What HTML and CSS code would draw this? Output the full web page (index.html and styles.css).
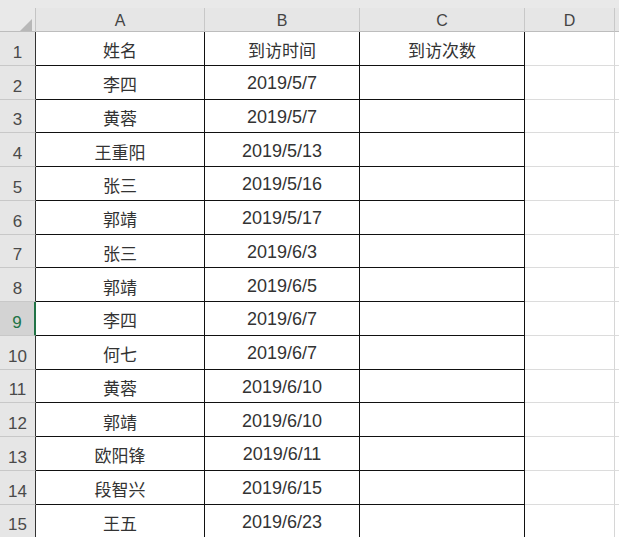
FILE: index.html
```
<!DOCTYPE html>
<html lang="zh">
<head>
<meta charset="utf-8">
<link rel="stylesheet" href="styles.css">
</head>
<body>
<div class="sheet">
  <div class="strip corner-strip"></div><div class="strip"></div><div class="strip"></div><div class="strip"></div><div class="strip"></div><div class="strip"></div>
  <div class="corner"><svg class="tri" width="12" height="12" viewBox="0 0 12 12"><polygon points="12,0 12,12 0,12" fill="#b8b8b8"/></svg></div>
  <div class="colh">A</div><div class="colh">B</div><div class="colh">C</div><div class="colh">D</div><div class="colh rest"></div>

  <div class="rowh">1</div><div class="cell">姓名</div><div class="cell">到访时间</div><div class="cell">到访次数</div><div class="cell grid"></div><div class="cell tail"></div>
  <div class="rowh">2</div><div class="cell">李四</div><div class="cell num">2019/5/7</div><div class="cell"></div><div class="cell grid"></div><div class="cell tail"></div>
  <div class="rowh">3</div><div class="cell">黄蓉</div><div class="cell num">2019/5/7</div><div class="cell"></div><div class="cell grid"></div><div class="cell tail"></div>
  <div class="rowh">4</div><div class="cell">王重阳</div><div class="cell num">2019/5/13</div><div class="cell"></div><div class="cell grid"></div><div class="cell tail"></div>
  <div class="rowh">5</div><div class="cell">张三</div><div class="cell num">2019/5/16</div><div class="cell"></div><div class="cell grid"></div><div class="cell tail"></div>
  <div class="rowh">6</div><div class="cell">郭靖</div><div class="cell num">2019/5/17</div><div class="cell"></div><div class="cell grid"></div><div class="cell tail"></div>
  <div class="rowh">7</div><div class="cell">张三</div><div class="cell num">2019/6/3</div><div class="cell"></div><div class="cell grid"></div><div class="cell tail"></div>
  <div class="rowh">8</div><div class="cell">郭靖</div><div class="cell num">2019/6/5</div><div class="cell"></div><div class="cell grid"></div><div class="cell tail"></div>
  <div class="rowh active">9</div><div class="cell">李四</div><div class="cell num">2019/6/7</div><div class="cell"></div><div class="cell grid"></div><div class="cell tail"></div>
  <div class="rowh">10</div><div class="cell">何七</div><div class="cell num">2019/6/7</div><div class="cell"></div><div class="cell grid"></div><div class="cell tail"></div>
  <div class="rowh">11</div><div class="cell">黄蓉</div><div class="cell num">2019/6/10</div><div class="cell"></div><div class="cell grid"></div><div class="cell tail"></div>
  <div class="rowh">12</div><div class="cell">郭靖</div><div class="cell num">2019/6/10</div><div class="cell"></div><div class="cell grid"></div><div class="cell tail"></div>
  <div class="rowh">13</div><div class="cell">欧阳锋</div><div class="cell num">2019/6/11</div><div class="cell"></div><div class="cell grid"></div><div class="cell tail"></div>
  <div class="rowh">14</div><div class="cell">段智兴</div><div class="cell num">2019/6/15</div><div class="cell"></div><div class="cell grid"></div><div class="cell tail"></div>
  <div class="rowh">15</div><div class="cell">王五</div><div class="cell num">2019/6/23</div><div class="cell"></div><div class="cell grid"></div><div class="cell tail"></div>
</div>
</body>
</html>
```
FILE: styles.css
```
* { box-sizing: border-box; }
html, body { margin: 0; padding: 0; background: #fff; overflow: hidden; }
body { width: 619px; height: 537px; }

.sheet {
  display: grid;
  grid-template-columns: 36px 169px 155px 165px 90px 4px;
  grid-template-rows: 8px 24px repeat(15, 33.75px);
  font-family: "Liberation Sans", "Noto Sans CJK SC", sans-serif;
}

.strip { background: #e9e9e9; }

.corner {
  background: #e9e9e9;
  border-right: 1px solid #c4c4c4;
  border-bottom: 1px solid #bdbdbd;
  position: relative;
}
.tri { position: absolute; left: 20px; top: 11px; }

.colh {
  background: #e6e6e6;
  border-right: 1px solid #c8c8c8;
  border-bottom: 1px solid #bdbdbd;
  display: flex;
  align-items: center;
  justify-content: center;
  font-size: 16px;
  color: #444;
  padding-top: 2px;
}
.colh.rest { border-right: none; }

.rowh {
  background: #e6e6e6;
  border-right: 1px solid #333;
  border-bottom: 1px solid #c8c8c8;
  display: flex;
  align-items: flex-end;
  justify-content: center;
  font-size: 17px;
  color: #4a4a4a;
  padding-bottom: 2px;
}
.rowh.active {
  background: #d3d3d3;
  color: #217346;
  border-right: 2px solid #217346;
}

.cell {
  border-right: 1px solid #111;
  border-bottom: 1px solid #111;
  display: flex;
  align-items: center;
  justify-content: center;
  font-family: "Noto Sans CJK SC", sans-serif;
  font-size: 17px;
  color: #333;
  padding-top: 3px;
}
.cell.num { font-family: "Liberation Sans", "Noto Sans CJK SC", sans-serif; font-size: 18px; }
.cell.grid { border-right: 1px solid #d6d6d6; border-bottom: 1px solid #dcdcdc; }
.cell.tail { border-right: none; border-bottom: 1px solid #dcdcdc; }
```
